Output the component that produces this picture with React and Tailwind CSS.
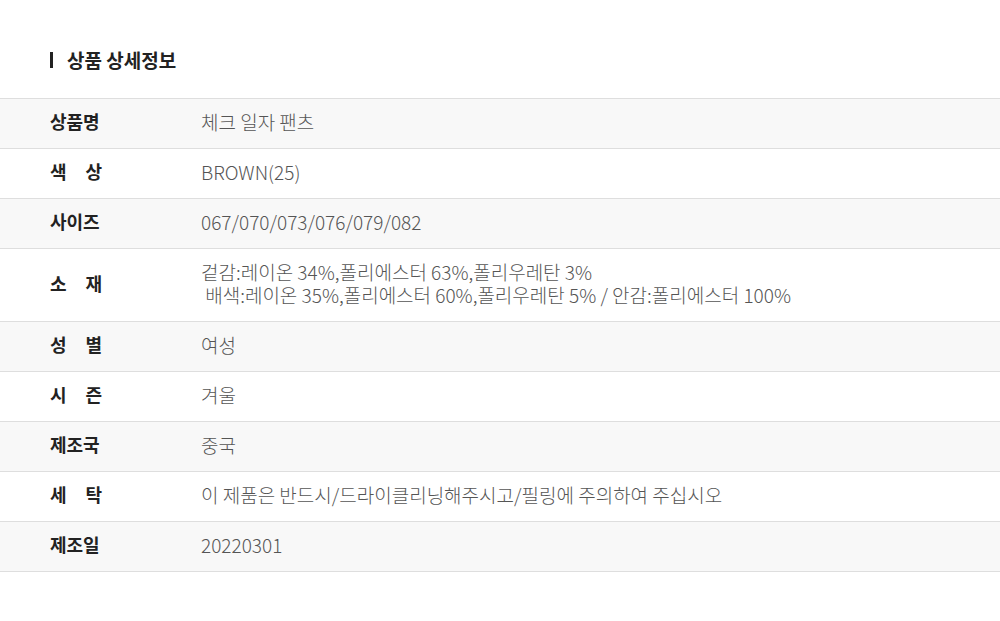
const ROWS = [
  { label: '상품명', value: ['체크 일자 팬츠'] },
  { label: '색 상', value: ['BROWN(25)'] },
  { label: '사이즈', value: ['067/070/073/076/079/082'] },
  {
    label: '소 재',
    value: [
      '겉감:레이온 34%,폴리에스터 63%,폴리우레탄 3%',
      '\u00a0배색:레이온 35%,폴리에스터 60%,폴리우레탄 5% / 안감:폴리에스터 100%',
    ],
  },
  { label: '성 별', value: ['여성'] },
  { label: '시 즌', value: ['겨울'] },
  { label: '제조국', value: ['중국'] },
  { label: '세 탁', value: ['이 제품은 반드시/드라이클리닝해주시고/필링에 주의하여 주십시오'] },
  { label: '제조일', value: ['20220301'] },
]

export default function App() {
  return (
    <div className="w-[1000px] h-[621px] bg-white font-['Noto_Sans_CJK_KR','Noto_Sans',sans-serif]">
      <div className="pt-[50px] pb-[28px] px-[50px] flex items-center leading-[20px]">
        <span className="w-[3px] h-[16px] bg-[#222]" />
        <h2 className="ml-[14px] text-[19px] leading-[20px] font-bold text-[#222]">상품 상세정보</h2>
      </div>

      <div className="border-t border-[#dedede]">
        {ROWS.map((row, i) => (
          <div
            key={row.label}
            className={`flex items-center border-b border-[#dedede] pt-[11px] pb-[15px] leading-[23px] ${i % 2 === 0 ? 'bg-[#f8f8f8]' : 'bg-white'}`}
          >
            <div className="w-[201px] shrink-0 pl-[50px]">
              <div className="w-[52px] text-[18px] leading-[23px] font-bold text-[#222] text-justify [text-align-last:justify]">
                {row.label}
              </div>
            </div>
            <div className="text-[19px] leading-[23px] font-light text-[#555]">
              {row.value.map((line) => (
                <div key={line}>{line}</div>
              ))}
            </div>
          </div>
        ))}
      </div>
    </div>
  )
}
